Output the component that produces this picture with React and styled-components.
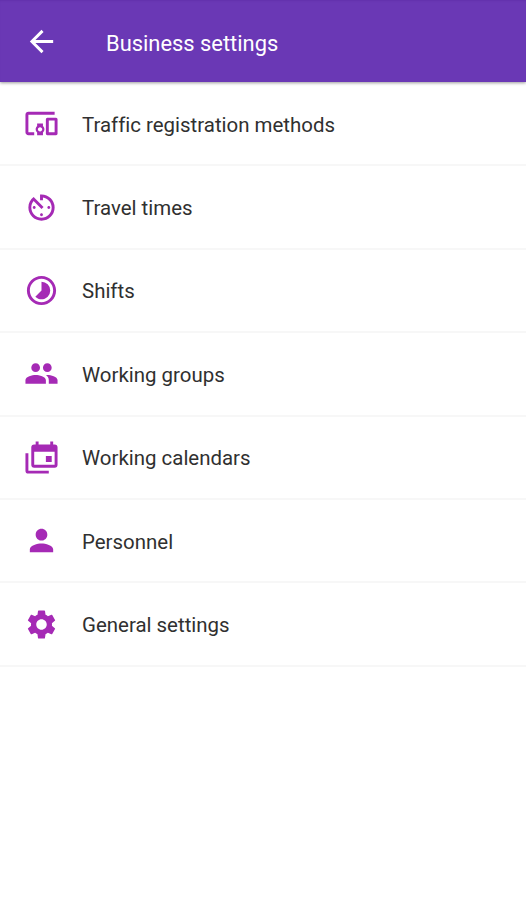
import React from 'react';
import styled, { createGlobalStyle } from 'styled-components';
import {
  MdArrowBack,
  MdAvTimer,
  MdDevicesOther,
  MdPeople,
  MdPerson,
  MdSettings,
  MdTimelapse,
} from 'react-icons/md';

const GlobalStyle = createGlobalStyle`
  * {
    box-sizing: border-box;
  }

  body {
    margin: 0;
    background-color: #fff;
    font-family: Roboto, 'Liberation Sans', sans-serif;
  }
`;

const Page = styled.div`
  display: flex;
  flex-direction: column;
  width: 100%;
  min-height: 100vh;
  overflow: hidden;
`;

const Header = styled.header`
  display: flex;
  align-items: center;
  height: 82px;
  padding: 1px 24px 0;
  background-color: #6a38b5;
  box-shadow: inset 0 2px 2px -1px #6231ab, 0 1px 3px rgba(0, 0, 0, 0.4);
  color: #fff;
`;

const BackButton = styled.button`
  display: flex;
  margin-right: 47px;
  padding: 0;
  border: none;
  background: none;
  color: #fff;
  font-size: 35px;
  cursor: pointer;
`;

const Title = styled.h1`
  margin: 0;
  padding-top: 3px;
  font-size: 21.9px;
  font-weight: 400;
`;

const Menu = styled.ul`
  margin: 0;
  padding: 1px 0 0;
  list-style: none;
`;

const MenuItem = styled.li`
  display: flex;
  align-items: center;
  height: 83.4px;
  padding: 0 24px;
  border-bottom: 2px solid #f7f7f7;
  color: #303030;
  cursor: pointer;
`;

const ItemIcon = styled.span`
  display: flex;
  width: 58px;
  color: #a52ab5;
  font-size: 35px;
`;

const ItemLabel = styled.span`
  padding-top: 2px;
  font-size: 20.45px;
  font-variant-ligatures: none;
`;

const CalendarsIcon = () => (
  <svg width="1em" height="1em" viewBox="0 0 24 24" fill="currentColor">
    <path d="M21 17V8H7v9h14m0-14a2 2 0 0 1 2 2v12a2 2 0 0 1-2 2H7a2 2 0 0 1-2-2V5a2 2 0 0 1 2-2h1V1h2v2h8V1h2v2h1M3 21h14v2H3a2 2 0 0 1-2-2V9h2v12m16-6h-4v-4h4v4z" />
  </svg>
);

const items = [
  { label: 'Traffic registration methods', Icon: MdDevicesOther },
  { label: 'Travel times', Icon: MdAvTimer },
  { label: 'Shifts', Icon: MdTimelapse },
  { label: 'Working groups', Icon: MdPeople },
  { label: 'Working calendars', Icon: CalendarsIcon },
  { label: 'Personnel', Icon: MdPerson },
  { label: 'General settings', Icon: MdSettings },
];

const App = () => {
  return (
    <Page>
      <GlobalStyle />
      <Header>
        <BackButton aria-label="Back">
          <MdArrowBack />
        </BackButton>
        <Title>Business settings</Title>
      </Header>
      <Menu>
        {items.map(({ label, Icon }) => (
          <MenuItem key={label}>
            <ItemIcon>
              <Icon />
            </ItemIcon>
            <ItemLabel>{label}</ItemLabel>
          </MenuItem>
        ))}
      </Menu>
    </Page>
  );
};

export default App;
